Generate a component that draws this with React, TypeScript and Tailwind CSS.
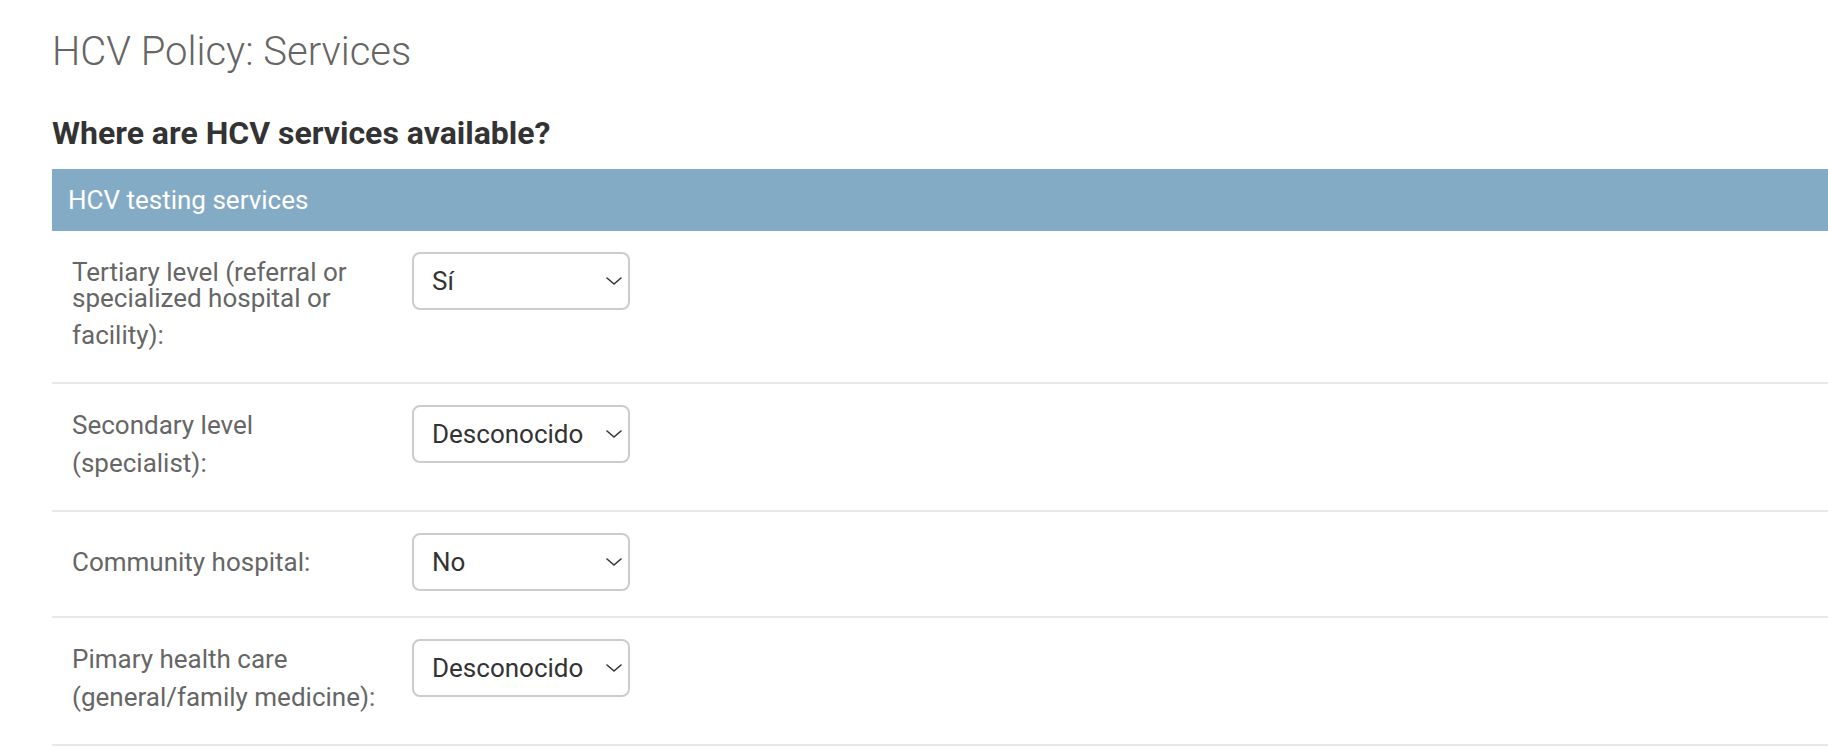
import React from "react";

type Row = {
  value: string;
  height: string;
  label: React.ReactNode;
};

const OPTIONS = ["Sí", "No", "Desconocido"];

function Chevron() {
  return (
    <svg
      width="16"
      height="8"
      viewBox="0 0 16 8"
      fill="none"
      className="pointer-events-none absolute right-[8px] top-1/2 -translate-y-1/2"
    >
      <path d="M1 1L8 7L15 1" stroke="#333" strokeWidth="1.6" strokeLinecap="round" strokeLinejoin="round" />
    </svg>
  );
}

function Select({ value }: { value: string }) {
  return (
    <div className="relative w-[218px] h-[58px] shrink-0">
      <select
        defaultValue={value}
        className="appearance-none w-full h-full bg-white border-2 border-[#cccccc] rounded-[8px] pl-[18px] pr-[30px] text-[26px] text-[#333333] font-['Roboto',sans-serif] outline-none"
      >
        {OPTIONS.map((o) => (
          <option key={o} value={o}>
            {o}
          </option>
        ))}
      </select>
      <Chevron />
    </div>
  );
}

const rows: Row[] = [
  {
    value: "Sí",
    height: "h-[153px]",
    label: (
      <div className="pt-[7px]">
        <div className="leading-[26px]">
          Tertiary level (referral or
          <br />
          specialized hospital or
        </div>
        <div className="leading-[38px] mt-[5px]">facility):</div>
      </div>
    ),
  },
  {
    value: "Desconocido",
    height: "h-[128px]",
    label: (
      <div className="pt-[1px] leading-[38px]">
        Secondary level
        <br />
        (specialist):
      </div>
    ),
  },
  {
    value: "No",
    height: "h-[106px]",
    label: <div className="pt-[10px] leading-[38px]">Community hospital:</div>,
  },
  {
    value: "Desconocido",
    height: "h-[128px]",
    label: (
      <div className="pt-[1px] leading-[38px]">
        Pimary health care
        <br />
        (general/family medicine):
      </div>
    ),
  },
];

export default function App() {
  return (
    <div className="min-h-screen bg-white pl-[52px] font-['Roboto',sans-serif]">
      {/* Page title */}
      <h1 className="pt-[28px] text-[40px] leading-[48px] font-light text-[#666666]">
        HCV Policy: Services
      </h1>

      <h2 className="mt-[38px] text-[32px] leading-[38px] font-bold text-[#333333]">
        Where are HCV services available?
      </h2>

      <fieldset className="mt-[17px]">
        <div className="h-[62px] flex items-center px-[16px] bg-[#84abc5] text-white text-[26px]">
          HCV testing services
        </div>

        {rows.map((r, i) => (
          <div
            key={i}
            className={`${r.height} flex pt-[21px] pl-[20px] border-b-2 border-[#e8e8e8]`}
          >
            <div className="w-[340px] shrink-0 whitespace-nowrap text-[26px] text-[#666666]">
              {r.label}
            </div>
            <Select value={r.value} />
          </div>
        ))}
      </fieldset>
    </div>
  );
}
